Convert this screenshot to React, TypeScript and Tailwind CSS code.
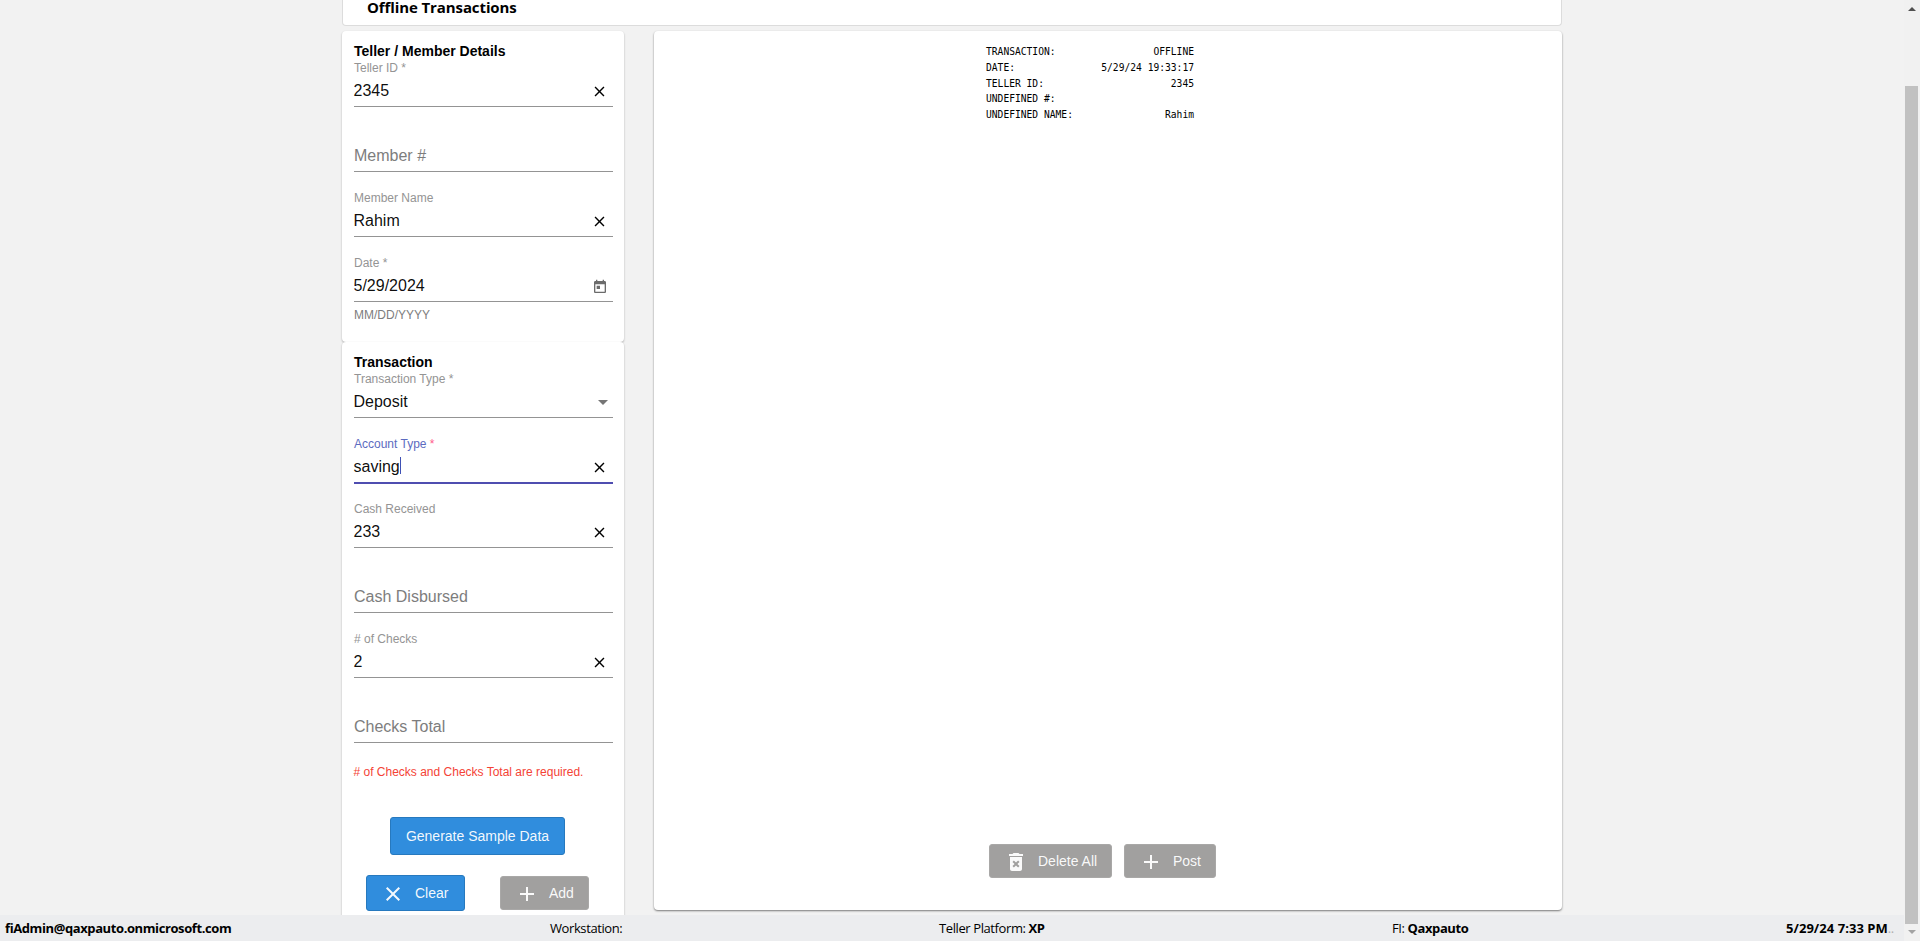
import { useState } from "react";
import type { ReactNode } from "react";

type FieldProps = {
  label: string;
  value?: string;
  required?: boolean;
  focused?: boolean;
  icon?: "clear" | "date" | "select";
};

const RECEIPT = [
  ["TRANSACTION:", "OFFLINE"],
  ["DATE:", "5/29/24 19:33:17"],
  ["TELLER ID:", "2345"],
  ["UNDEFINED #:", ""],
  ["UNDEFINED NAME:", "Rahim"],
];

const PATHS = {
  close: "M19 6.41L17.59 5 12 10.59 6.41 5 5 6.41 10.59 12 5 17.59 6.41 19 12 13.41 17.59 19 19 17.59 13.41 12z",
  add: "M19 13h-6v6h-2v-6H5v-2h6V5h2v6h6v2z",
  trash:
    "M6 19c0 1.1.9 2 2 2h8c1.1 0 2-.9 2-2V7H6v12zm2.46-7.12l1.41-1.41L12 12.59l2.12-2.12 1.41 1.41L13.41 14l2.12 2.12-1.41 1.41L12 15.41l-2.12 2.12-1.41-1.41L10.59 14l-2.13-2.12zM15.5 4l-1-1h-5l-1 1H5v2h14V4z",
  today:
    "M19 3h-1V1h-2v2H8V1H6v2H5c-1.11 0-1.99.9-1.99 2L3 19c0 1.1.89 2 2 2h14c1.1 0 2-.9 2-2V5c0-1.1-.9-2-2-2zm0 16H5V8h14v11zM7 10h5v5H7z",
};

function Icon({ name, size, className = "" }: { name: keyof typeof PATHS; size: number; className?: string }) {
  return (
    <svg width={size} height={size} viewBox="0 0 24 24" fill="currentColor" className={`shrink-0 ${className}`}>
      <path d={PATHS[name]} />
    </svg>
  );
}

function Field({ label, value = "", required, focused, icon }: FieldProps) {
  const [text, setText] = useState(value);

  return (
    <div className="h-[65px] w-[259px]">
      <div className={`h-[14px] text-xs leading-[14px] ${focused ? "text-[#5c6bc0]" : "text-[#949494]"}`}>
        {text && (
          <>
            {label}
            {required && <span className={focused ? "text-[#ff5c8d]" : ""}> *</span>}
          </>
        )}
      </div>
      <div
        className={`flex items-start justify-between ${
          focused ? "h-[33px] border-b-2 border-[#4f4db0]" : "h-[32px] border-b border-[#949494]"
        }`}
      >
        <div className={`flex pt-[7px] text-base leading-[18px] ${text ? "-ml-[0.5px] text-black/95" : "text-[#7d7d7d]"}`}>
          {text || label}
          {focused && <span className="-mt-px ml-[0.5px] h-[17px] w-px bg-[#3f51b5]" />}
        </div>
        {icon === "clear" && (
          <button onClick={() => setText("")} className="mr-[5px] mt-[8px] text-black">
            <Icon name="close" size={17} />
          </button>
        )}
        {icon === "date" && (
          <span className="mr-[5px] mt-[9px] text-[#6b6b6b]">
            <Icon name="today" size={16} />
          </span>
        )}
        {icon === "select" && (
          <span className="mr-[5px] mt-[14px] border-x-[5px] border-t-[5px] border-x-transparent border-t-[#757575]" />
        )}
      </div>
    </div>
  );
}

function Button({ className, children }: { className: string; children: ReactNode }) {
  return (
    <button className={`flex items-center rounded-[3px] border text-sm leading-none text-white/95 ${className}`}>
      {children}
    </button>
  );
}

export default function App() {
  return (
    <div className="flex h-[941px] w-[1920px] overflow-hidden bg-[#f2f2f2] font-['Liberation_Sans',Arial,sans-serif] text-black">
      <div className="flex w-[1904px] flex-col">
        <main className="flex h-[915px] flex-col overflow-hidden pl-[342px]">
          <header className="h-[26px] w-[1220px] shrink-0 rounded-b-[4px] border border-t-0 border-[#dcdcdc] bg-white pl-[24px] font-['Open_Sans',sans-serif] text-[15px] font-bold leading-[15px] tracking-[-0.1px]">
            Offline Transactions
          </header>

          <div className="mt-[5px] flex gap-[30px]">
            <div className="w-[282px]">
              {/* Teller / member */}
              <section className="h-[311px] rounded-[4px] bg-white pl-[12px] pt-[12px] shadow-[0_1px_2px_rgba(0,0,0,0.3)]">
                <h2 className="h-[18px] text-sm font-bold leading-[17px]">Teller / Member Details</h2>
                <Field label="Teller ID" value="2345" required icon="clear" />
                <Field label="Member #" />
                <Field label="Member Name" value="Rahim" icon="clear" />
                <Field label="Date" value="5/29/2024" required icon="date" />
                <p className="-mt-[13px] text-xs leading-[14px] text-[#7d7d7d]">MM/DD/YYYY</p>
              </section>

              {/* Transaction */}
              <section className="h-[600px] rounded-[4px] bg-white pl-[12px] pt-[12px] shadow-[0_1px_2px_rgba(0,0,0,0.3)]">
                <h2 className="h-[18px] text-sm font-bold leading-[17px]">Transaction</h2>
                <Field label="Transaction Type" value="Deposit" required icon="select" />
                <Field label="Account Type" value="saving" required focused icon="clear" />
                <Field label="Cash Received" value="233" icon="clear" />
                <Field label="Cash Disbursed" />
                <Field label="# of Checks" value="2" icon="clear" />
                <Field label="Checks Total" />
                <p className="-ml-[0.5px] mt-[3px] text-xs leading-[14px] text-[#f44336]">
                  # of Checks and Checks Total are required.
                </p>
                <Button className="ml-[36px] mt-[38px] h-[38px] w-[175px] justify-center border-[#2779be] bg-[#308ddd]">
                  Generate Sample Data
                </Button>
                <div className="mt-[20px] flex items-center pl-[12px]">
                  <Button className="h-[36px] w-[99px] gap-[10px] border-[#2779be] bg-[#308ddd] pl-[14px]">
                    <Icon name="close" size={24} className="mt-[2px]" />
                    Clear
                  </Button>
                  <Button className="ml-[35px] h-[34px] w-[89px] gap-[10px] border-[#a9a8a7] bg-[#a1a09f] pl-[14px]">
                    <Icon name="add" size={24} className="mt-[2px]" />
                    Add
                  </Button>
                </div>
              </section>
            </div>

            {/* Receipt preview */}
            <section className="flex h-[879px] w-[908px] flex-col justify-between rounded-[4px] bg-white pb-[32px] pt-[13px] shadow-[0_1px_2px_rgba(0,0,0,0.5)]">
              <div className="ml-[332px] w-[208px] font-['DejaVu_Sans_Mono',monospace] text-[9.65px] leading-[15.75px]">
                {RECEIPT.map(([label, value]) => (
                  <div key={label} className="flex justify-between">
                    <span>{label}</span>
                    <span>{value}</span>
                  </div>
                ))}
              </div>
              <div className="ml-[335px] flex gap-[12px]">
                <Button className="h-[34px] w-[123px] gap-[10px] border-[#a9a8a7] bg-[#a1a09f] pl-[14px]">
                  <Icon name="trash" size={24} className="mt-[2px]" />
                  Delete All
                </Button>
                <Button className="h-[34px] w-[92px] gap-[10px] border-[#a9a8a7] bg-[#a1a09f] pl-[14px]">
                  <Icon name="add" size={24} className="mt-[2px]" />
                  Post
                </Button>
              </div>
            </section>
          </div>
        </main>

        <footer className="flex h-[26px] whitespace-nowrap bg-[#ecedef] pl-[5px] font-['Open_Sans',sans-serif] text-[13px] leading-[26px] tracking-[-0.4px]">
          <b className="w-[545px]">fiAdmin@qaxpauto.onmicrosoft.com</b>
          <span className="w-[389px]">Workstation:</span>
          <span className="w-[453px]">
            Teller Platform: <b>XP</b>
          </span>
          <span className="w-[394px]">
            FI: <b>Qaxpauto</b>
          </span>
          <span>
            <b className="tracking-[0.05px]">5/29/24 7:33 PM</b>
            <span className="text-[#b0b0b0]">..</span>
          </span>
        </footer>
      </div>

      {/* Scrollbar */}
      <div className="flex w-[16px] flex-col bg-[#f1f1f1]">
        <span className="ml-[4px] mt-[7px] h-0 w-0 border-x-[4px] border-b-[4px] border-x-transparent border-b-[#505050]" />
        <div className="ml-px mt-[75px] h-[838px] w-[13px] bg-[#c1c1c1]" />
        <span className="ml-[4px] mt-[6px] h-0 w-0 border-x-[4px] border-t-[4px] border-x-transparent border-t-[#a3a3a3]" />
      </div>
    </div>
  );
}
